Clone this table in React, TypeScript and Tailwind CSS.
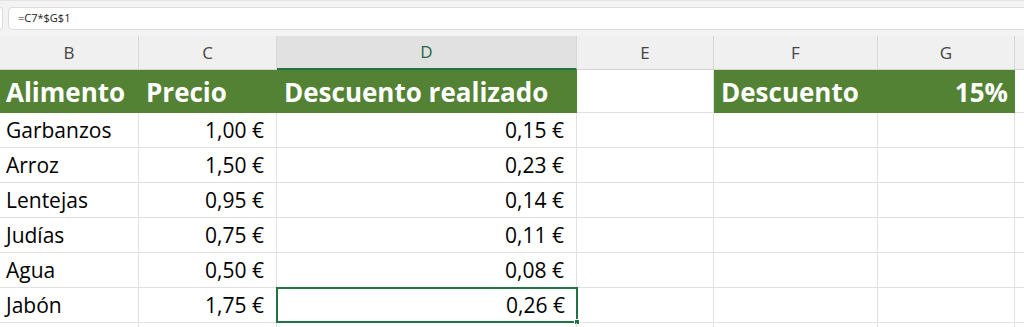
import React from 'react';

const cols = ['B', 'C', 'D', 'E', 'F', 'G', ''];

const rows = [
  ['Garbanzos', '1,00 €', '0,15 €'],
  ['Arroz', '1,50 €', '0,23 €'],
  ['Lentejas', '0,95 €', '0,14 €'],
  ['Judías', '0,75 €', '0,11 €'],
  ['Agua', '0,50 €', '0,08 €'],
  ['Jabón', '1,75 €', '0,26 €'],
  ['', '', ''],
];

const grid = 'grid grid-cols-[139px_138px_300px_137px_164px_137px_1fr]';

export default function App() {
  return (
    <div className="w-[1024px] h-[327px] overflow-hidden bg-white" style={{ fontFamily: '"Open Sans", sans-serif' }}>
      {/* formula bar */}
      <div className="h-[36px] bg-[#f3f3f3] border-t border-[#e3e3e3] pt-[6px] flex gap-[5px]">
        <div className="w-[3px] h-[23px] bg-white border border-l-0 border-[#dcdcdc] rounded-r-[4px]" />
        <div className="flex-1 h-[23px] bg-white border border-r-0 border-[#dcdcdc] rounded-l-[5px] flex items-center pl-[9px] text-[11px] text-[#222]">
          =C7*$G$1
        </div>
      </div>

      {/* column headers */}
      <div className={`${grid} h-[34px]`}>
        {cols.map((c, i) => (
          <div
            key={i}
            className={`flex items-center justify-center text-[17px] ${i === 2 ? 'bg-[#e1e1e1] text-[#1e6b41] border-b-2 border-[#217346]' : 'bg-[#f0f0f0] text-[#444] border-b border-[#d4d4d4]'} ${i < 6 ? 'border-r border-r-[#d8d8d8]' : ''}`}
          >
            {c}
          </div>
        ))}
      </div>

      {/* title row */}
      <div className={`${grid} h-[43px] text-[26px] font-bold text-white leading-none`}>
        <div className="bg-[#548235] flex items-center pl-[6px]">Alimento</div>
        <div className="bg-[#548235] flex items-center pl-[7px]">Precio</div>
        <div className="bg-[#548235] flex items-center pl-[7px]">Descuento realizado</div>
        <div className="bg-white border-r border-b border-[#e1e1e1]" />
        <div className="bg-[#548235] flex items-center pl-[7px]">Descuento</div>
        <div className="bg-[#548235] flex items-center justify-end pr-[7px]">15%</div>
        <div className="bg-white border-b border-[#e1e1e1]" />
      </div>

      {/* data rows */}
      {rows.map((r, ri) => (
        <div key={ri} className={`${grid} h-[35px] text-[21px] text-black leading-none`}>
          <div className="border-r border-b border-[#e1e1e1] flex items-center pl-[6px]">{r[0]}</div>
          <div className="border-r border-b border-[#e1e1e1] flex items-center justify-end pr-[12px]">{r[1]}</div>
          <div className={`relative flex items-center justify-end pr-[12px] ${ri === 5 ? '' : 'border-r border-b border-[#e1e1e1]'}`}>
            {ri === 5 && (
              <div className="absolute -left-px -top-px right-[-1px] bottom-0 border-2 border-[#217346]">
                <div className="absolute -right-[4px] -bottom-[4px] w-[6px] h-[6px] bg-[#217346] border border-white" />
              </div>
            )}
            <span className="relative">{r[2]}</span>
          </div>
          <div className="border-r border-b border-[#e1e1e1]" />
          <div className="border-r border-b border-[#e1e1e1]" />
          <div className="border-r border-b border-[#e1e1e1]" />
          <div className="border-b border-[#e1e1e1]" />
        </div>
      ))}
    </div>
  );
}
